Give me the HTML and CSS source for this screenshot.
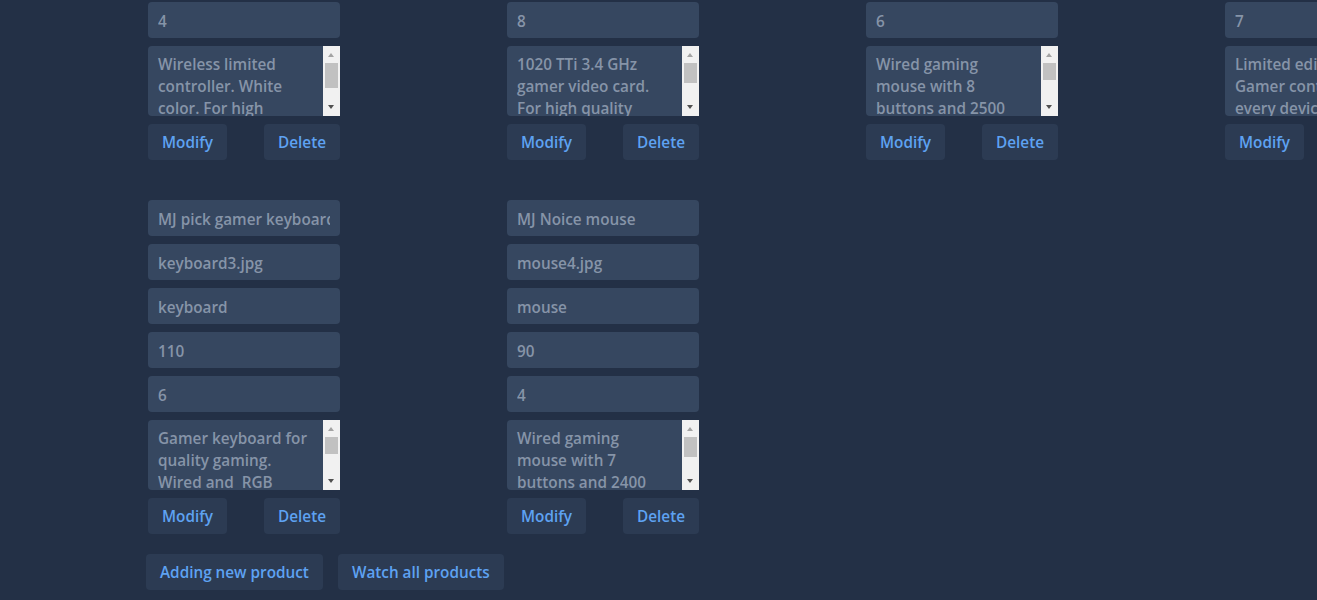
FILE: index.html
```html
<!DOCTYPE html>
<html lang="en">
<head>
<meta charset="utf-8">
<title>Products</title>
<link rel="stylesheet" href="styles.css">
</head>
<body>
<main class="page">
  <section class="grid">
    <form class="card">
      <input class="field" value="Wireless Controller X">
      <input class="field" value="controller2.jpg">
      <input class="field" value="controller">
      <input class="field" value="70">
      <input class="field" value="4">
      <div class="area-wrap">
        <textarea class="field area">Wireless limited controller. White color. For high quality gaming on every device. Battery lasts up to 20 hours.</textarea>
        <div class="sbar"><span class="arrow up"></span><span class="track"><span class="thumb" style="height:25px"></span></span><span class="arrow down"></span></div>
      </div>
      <div class="actions"><button type="button" class="btn">Modify</button><button type="button" class="btn">Delete</button></div>
    </form>
    <form class="card">
      <input class="field" value="MJ 1020 TTi">
      <input class="field" value="videocard1.jpg">
      <input class="field" value="videocard">
      <input class="field" value="450">
      <input class="field" value="8">
      <div class="area-wrap">
        <textarea class="field area">1020 TTi 3.4 GHz gamer video card. For high quality gaming. 8 GB memory, ray tracing and quiet cooling.</textarea>
        <div class="sbar"><span class="arrow up"></span><span class="track"><span class="thumb" style="height:20px"></span></span><span class="arrow down"></span></div>
      </div>
      <div class="actions"><button type="button" class="btn">Modify</button><button type="button" class="btn">Delete</button></div>
    </form>
    <form class="card">
      <input class="field" value="MJ Gaming mouse">
      <input class="field" value="mouse2.jpg">
      <input class="field" value="mouse">
      <input class="field" value="80">
      <input class="field" value="6">
      <div class="area-wrap">
        <textarea class="field area">Wired gaming mouse with 8 buttons and 2500 DPI. RGB lights and comfortable grip for long gaming sessions on every surface.</textarea>
        <div class="sbar"><span class="arrow up"></span><span class="track"><span class="thumb" style="height:17px"></span></span><span class="arrow down"></span></div>
      </div>
      <div class="actions"><button type="button" class="btn">Modify</button><button type="button" class="btn">Delete</button></div>
    </form>
    <form class="card">
      <input class="field" value="MJ Limited controller">
      <input class="field" value="controller3.jpg">
      <input class="field" value="controller">
      <input class="field" value="95">
      <input class="field" value="7">
      <div class="area-wrap">
        <textarea class="field area">Limited edition. Gamer controller for every device. Wireless and wired modes.</textarea>
        <div class="sbar"><span class="arrow up"></span><span class="track"><span class="thumb" style="height:22px"></span></span><span class="arrow down"></span></div>
      </div>
      <div class="actions"><button type="button" class="btn">Modify</button><button type="button" class="btn">Delete</button></div>
    </form>
    <form class="card">
      <input class="field" value="MJ pick gamer keyboard">
      <input class="field" value="keyboard3.jpg">
      <input class="field" value="keyboard">
      <input class="field" value="110">
      <input class="field" value="6">
      <div class="area-wrap">
        <textarea class="field area">Gamer keyboard for quality gaming. Wired and  RGB lights with mechanical switches and full anti-ghosting support.</textarea>
        <div class="sbar"><span class="arrow up"></span><span class="track"><span class="thumb" style="height:17px"></span></span><span class="arrow down"></span></div>
      </div>
      <div class="actions"><button type="button" class="btn">Modify</button><button type="button" class="btn">Delete</button></div>
    </form>
    <form class="card">
      <input class="field" value="MJ Noice mouse">
      <input class="field" value="mouse4.jpg">
      <input class="field" value="mouse">
      <input class="field" value="90">
      <input class="field" value="4">
      <div class="area-wrap">
        <textarea class="field area">Wired gaming mouse with 7 buttons and 2400 DPI. Light weight and precise sensor.</textarea>
        <div class="sbar"><span class="arrow up"></span><span class="track"><span class="thumb" style="height:20px"></span></span><span class="arrow down"></span></div>
      </div>
      <div class="actions"><button type="button" class="btn">Modify</button><button type="button" class="btn">Delete</button></div>
    </form>
  </section>
  <nav class="footer">
    <button type="button" class="btn">Adding new product</button>
    <button type="button" class="btn">Watch all products</button>
  </nav>
</main>
</body>
</html>
```
FILE: styles.css
```css
html, body {
  margin: 0;
  padding: 0;
  background: #233046;
  overflow: hidden;
  height: 600px;
}
body {
  font-family: "Open Sans", "Noto Sans", sans-serif;
  font-weight: 600;
  font-size: 15.3px;
}
.page {
  margin-top: -174px;
  padding-left: 148px;
  width: 1500px;
}
.grid {
  display: grid;
  grid-template-columns: repeat(4, 192px);
  column-gap: 167px;
  row-gap: 40px;
}
.card {
  display: flex;
  flex-direction: column;
  gap: 8px;
  margin: 0;
}
.field {
  box-sizing: border-box;
  height: 36px;
  width: 192px;
  border: none;
  border-radius: 4px;
  background: #364760;
  color: #8694a8;
  font: inherit;
  padding: 2px 10px 0;
  outline: none;
  margin: 0;
}
.area-wrap {
  position: relative;
  height: 70px;
}
.area {
  height: 70px;
  padding: 7px 29px 0 10px;
  line-height: 22px;
  resize: none;
  overflow: hidden;
  display: block;
}
.sbar {
  position: absolute;
  top: 0;
  right: 0;
  width: 17px;
  height: 70px;
  background: #f1f1f1;
  display: flex;
  flex-direction: column;
}
.arrow {
  height: 17px;
  flex: none;
  position: relative;
}
.arrow::after {
  content: "";
  position: absolute;
  left: 5px;
  width: 0;
  height: 0;
  border-left: 3.5px solid transparent;
  border-right: 3.5px solid transparent;
}
.arrow.up::after {
  top: 7px;
  border-bottom: 4px solid #a3a3a3;
}
.arrow.down::after {
  top: 6px;
  border-top: 4px solid #505050;
}
.track {
  flex: 1;
  padding: 0 2px;
}
.thumb {
  display: block;
  background: #c1c1c1;
}
.actions {
  display: flex;
  justify-content: space-between;
}
.btn {
  height: 36px;
  border: none;
  border-radius: 4px;
  background: #2c3b53;
  color: #5ea2f2;
  font: inherit;
  padding: 0 14px;
  cursor: pointer;
}
.footer {
  display: flex;
  gap: 15px;
  margin-top: 20px;
  margin-left: -2px;
}
```
